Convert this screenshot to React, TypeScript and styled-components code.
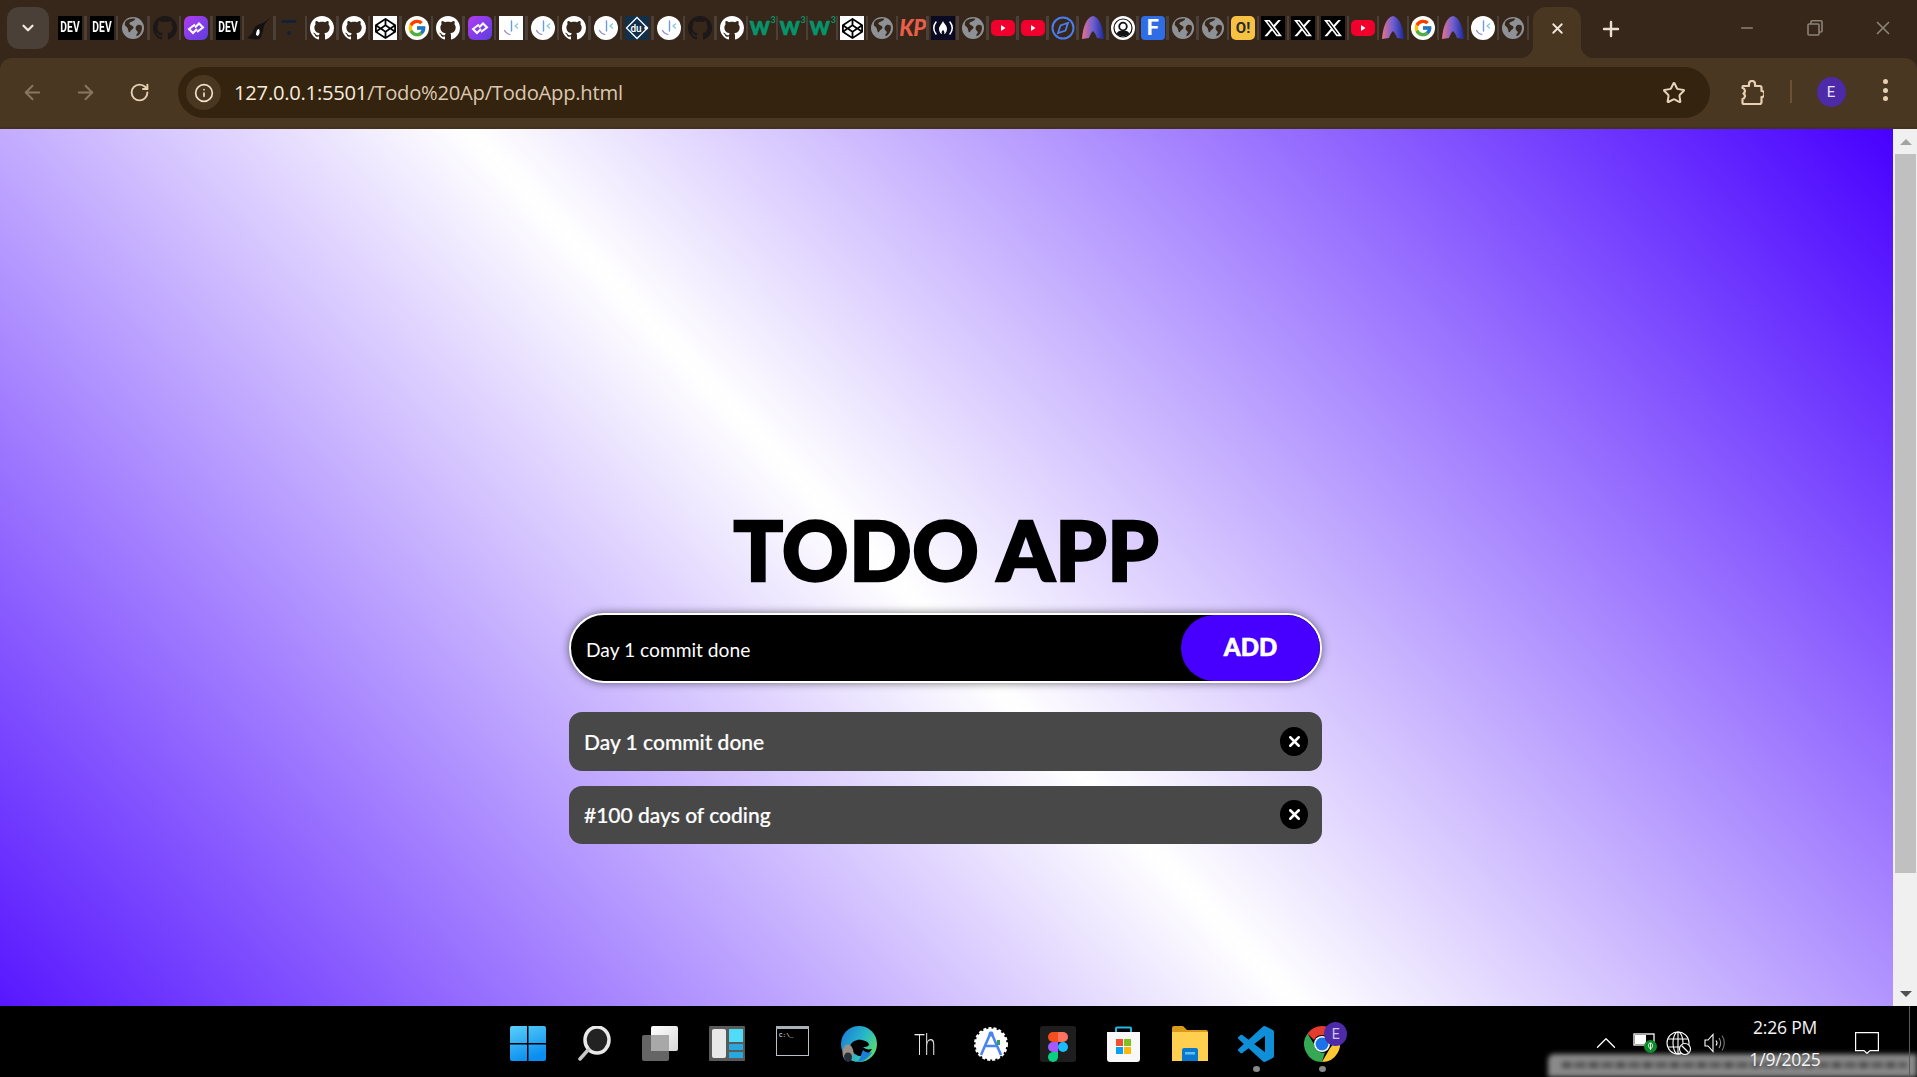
import React from "react";
import styled, { createGlobalStyle } from "styled-components";
import { ArrowLeft, ArrowRight, RotateCw, Info, Star, Plus, X, Minus, ChevronDown, ChevronUp } from "lucide-react";
import { FcGoogle } from "react-icons/fc";
import { FaCodepen } from "react-icons/fa";
import { FaXTwitter } from "react-icons/fa6";

const Global = createGlobalStyle`
  html, body { margin: 0; padding: 0; background: #000; }
  body { font-family: "Open Sans", "Liberation Sans", sans-serif; overflow: hidden; }
  * { box-sizing: border-box; }
`;

const Screen = styled.div`
  width: 1917px; height: 1077px; display: flex; flex-direction: column; overflow: hidden; position: relative;
`;

/* ---------- tab strip ---------- */
const TabStrip = styled.div`
  height: 58px; background: #36271a; display: flex; align-items: flex-start; padding-left: 7px; flex: none;
`;
const TabSearch = styled.div`
  width: 42px; height: 42px; margin-top: 7px; border-radius: 12px; background: #4a4038; color: #f2e8dc;
  display: flex; align-items: center; justify-content: center; flex: none;
`;
const TabRow = styled.div`
  display: flex; margin: 16px 0 0 5.25px; flex: none;
`;
const TabCell = styled.div<{ $w: number }>`
  width: ${p => p.$w}px; height: 24px; flex: none; display: flex; align-items: center; justify-content: center;
  position: relative;
  &::after { content: ""; position: absolute; right: -1px; top: 0; bottom: 0; width: 2.5px; background: #4a4038; }
`;
const ActiveTab = styled.div`
  width: 48px; height: 51px; margin: 7px 0 0 5px; background: #4a3722; border-radius: 13px 13px 0 0; color: #f2e8dc;
  display: flex; align-items: center; justify-content: center; padding-bottom: 9px; position: relative; flex: none;
  &::before, &::after { content: ""; position: absolute; bottom: 0; width: 13px; height: 13px; }
  &::before { left: -13px; background: radial-gradient(circle at 0 0, transparent 13px, #4a3722 13.5px); }
  &::after { right: -13px; background: radial-gradient(circle at 100% 0, transparent 13px, #4a3722 13.5px); }
`;
const NewTab = styled.div`
  width: 24px; height: 24px; margin: 17px 0 0 18px; color: #eadfd2; flex: none; display: flex;
`;
const WindowControls = styled.div`
  margin-left: auto; display: flex; color: #8b8378; flex: none;
`;
const WindowButton = styled.div`
  width: 68px; height: 42px; margin-top: 7px; display: flex; align-items: center; justify-content: center;
`;

/* ---------- favicons ---------- */
const LetterTile = styled.span<{ $bg: string; $fg: string; $radius?: number; $size: number }>`
  width: 24px; height: 24px; background: ${p => p.$bg}; color: ${p => p.$fg}; border-radius: ${p => p.$radius ?? 0}px;
  font: 700 ${p => p.$size}px/24px "Roboto", "Liberation Sans", sans-serif; text-align: center; display: block; overflow: hidden;
`;
const DevLabel = styled.span`
  display: block; transform: scaleX(0.82) scaleY(1.1); letter-spacing: 0.2px;
`;
const WhiteSquare = styled.span`
  width: 24px; height: 24px; background: #fff; display: flex; align-items: center; justify-content: center; color: #000;
`;
const WhiteDisc = styled(WhiteSquare)`
  border-radius: 50%;
`;
const XTile = styled(WhiteSquare)`
  background: #000; color: #fff;
`;
const W3Mark = styled.span`
  color: #04956c; font: 900 19px/24px "Lato", "Liberation Sans", sans-serif; display: block; width: 25px; position: relative;
  -webkit-text-stroke: 0.7px #04956c; letter-spacing: 0;
  & > sup { font-size: 9px; font-weight: 700; position: absolute; right: -1px; top: -8px; line-height: 24px; -webkit-text-stroke: 0; }
`;
const KpMark = styled.span`
  color: #ea5f4c; font: italic 900 22px/24px "Lato", "Liberation Sans", sans-serif; letter-spacing: -0.5px;
`;

const GH = "M8 0C3.58 0 0 3.58 0 8c0 3.54 2.29 6.53 5.47 7.59.4.07.55-.17.55-.38 0-.19-.01-.82-.01-1.49-2.01.37-2.53-.49-2.69-.94-.09-.23-.48-.94-.82-1.13-.28-.15-.68-.52-.01-.53.63-.01 1.08.58 1.23.82.72 1.21 1.87.87 2.33.66.07-.52.28-.87.51-1.07-1.78-.2-3.64-.89-3.64-3.95 0-.87.31-1.59.82-2.15-.08-.2-.36-1.02.08-2.12 0 0 .67-.21 2.2.82.64-.18 1.32-.27 2-.27.68 0 1.36.09 2 .27 1.53-1.04 2.2-.82 2.2-.82.44 1.1.16 1.92.08 2.12.51.56.82 1.27.82 2.15 0 3.07-1.87 3.75-3.65 3.95.29.25.54.73.54 1.48 0 1.07-.01 1.93-.01 2.2 0 .21.15.46.55.38A8.013 8.013 0 0016 8c0-4.42-3.58-8-8-8z";

const Github = ({ c }: { c: string }) => (
  <svg width="24" height="24" viewBox="0 0 16 16"><path d={GH} fill={c} /></svg>
);
const Globe = () => (
  <svg width="22" height="24" viewBox="0 0 24 24">
    <circle cx="12" cy="12" r="12" fill="#8e9297" />
    <path d="M4 4.500C7 2 11 1 14.500 2c-.5 2-3 3-5 3.500-1.500.5-2 2-.5 3 2 1 4 1.500 3.500 3.500-.5 1.500-2.500 1.500-3 3-.5 1-1 2-2 1.500-1-2-.5-3-1.500-4.500S3.500 10 3 8.500c0-1.500.5-3 1-4z" fill="#36271a" />
    <path d="M16.500 9c1.500-.8 3.500-.5 5 .5.500 2.500.2 4.500-.5 6-1 2.500-2.500 4.500-5 5.500-.7-1 0-2.500 1-3.500s-.3-2-1.500-3c-1-1.200-1-4 1-5.500z" fill="#36271a" />
  </svg>
);
const Slash = () => (
  <svg width="24" height="24" viewBox="0 0 24 24" fill="none">
    <path d="M11 18.500c-2.500-.5-4.500-2-5.500-4" stroke="#8d86d8" strokeWidth="1.200" strokeLinecap="round" />
    <path d="M12.500 5v10" stroke="#6f9bd8" strokeWidth="1.400" strokeLinecap="round" />
    <path d="M19 7.500l-3 2.500 3 2.500" stroke="#7cc7e0" strokeWidth="1.200" />
  </svg>
);
const Purple = () => (
  <svg width="24" height="24" viewBox="0 0 24 24">
    <defs><linearGradient id="pg" x1="0" y1="0" x2="1" y2="1"><stop offset="0" stopColor="#b23cf0" /><stop offset="1" stopColor="#5a3fe0" /></linearGradient></defs>
    <rect width="24" height="24" rx="6" fill="url(#pg)" />
    <path d="M11 8.500L5 13l4 4 4-4M13 16l6-4.500-4-4-4 4" fill="none" stroke="#fff" strokeWidth="2" />
  </svg>
);
const Bird = () => (
  <svg width="24" height="24" viewBox="0 0 24 24">
    <path d="M0 22c2-1 3-3 5-4 1-4 3-9 8-10 4-1 7-4 11-7-3 3-6 6-7 9-1 5-2 9-4 13-5 1-9 0-13-1z" fill="#141210" />
    <path d="M9 19c0-3 1-6 3-6 1 2 1 5-1 7z" fill="#fff" />
  </svg>
);
const DarkT = () => (
  <svg width="24" height="24" viewBox="0 0 24 24">
    <rect x="2.500" y="4" width="15" height="3" rx="1" fill="#142033" />
    <circle cx="10" cy="17" r="2" fill="#142033" />
  </svg>
);
const Du = () => (
  <svg width="24" height="24" viewBox="0 0 24 24">
    <rect width="24" height="24" fill="#12304a" />
    <path d="M12 1.500L22.500 12 12 22.500 1.500 12z" fill="none" stroke="#fff" strokeWidth="1.300" />
    <text x="11" y="15.500" textAnchor="middle" fontSize="10" fontFamily="Roboto" fontWeight="500" fill="#fff">du</text>
    <circle cx="21" cy="12" r="1.800" fill="#fff" />
  </svg>
);
const Youtube = () => (
  <svg width="24" height="24" viewBox="0 0 24 24">
    <rect y="4" width="24" height="16" rx="5" fill="#f2002d" />
    <path d="M10 9v6l4.500-3z" fill="#fff" />
  </svg>
);
const Compass = () => (
  <svg width="24" height="24" viewBox="0 0 24 24" fill="none">
    <circle cx="12" cy="12" r="10.500" stroke="#4a7df0" strokeWidth="2" />
    <path d="M17 7l-2.500 7.500L7 17l2.500-7.500z" stroke="#4a7df0" strokeWidth="1.800" />
  </svg>
);
const Arc = ({ id }: { id: string }) => (
  <svg width="22" height="24" viewBox="0 0 22 24">
    <defs><linearGradient id={id} x1="0" y1="0" x2="1" y2="0"><stop offset="0" stopColor="#e8718a" /><stop offset="0.5" stopColor="#6f5fd0" /><stop offset="1" stopColor="#1a2a9a" /></linearGradient></defs>
    <path d="M11 0C5 1 1 10 0 23l7-1c1-3 2-5 4-7 2 2 3 4 4 7l7 1C21 10 17 1 11 0z" fill={`url(#${id})`} />
  </svg>
);
const Avatar = () => (
  <svg width="24" height="24" viewBox="0 0 24 24">
    <circle cx="12" cy="12" r="12" fill="#fff" />
    <circle cx="12" cy="12" r="9" fill="none" stroke="#111" strokeWidth="1.200" />
    <circle cx="12" cy="10.500" r="3.800" fill="none" stroke="#111" strokeWidth="1.800" />
    <path d="M5.500 18c1-3 3.500-3.500 6.500-3.500s5.500.5 6.500 3.500c-3.500 3-9.500 3-13 0z" fill="#111" />
  </svg>
);
const FccMark = () => (
  <svg width="24" height="24" viewBox="0 0 24 24" fill="none">
    <rect width="24" height="24" fill="#0a0a23" />
    <path d="M5 6c-3 4-3 8 0 12M19 6c3 4 3 8 0 12" stroke="#fff" strokeWidth="1.500" strokeLinecap="round" />
    <path d="M12 5c1 3 4 4 4 8 0 3-2 5-3 5 1-2 0-3-1-4-1 1-2 2-1 4-1 0-3-2-3-5 0-3 3-5 4-8z" fill="#fff" />
  </svg>
);

const FAV: string[] = [
  "dev", "dev", "globe", "ghd", "purple", "dev", "bird", "t", "gh", "gh", "cp", "g", "gh", "purple", "sq", "disc", "gh", "disc", "du", "disc", "ghd", "gh",
  "w3", "w3", "w3", "cp", "globe", "kp", "fcc", "globe", "yt", "yt", "compass", "arc", "avatar", "f", "globe", "globe", "oo", "x", "x", "x", "yt", "arc", "g", "arc", "disc", "globe",
];

const Favicon = ({ kind, index }: { kind: string; index: number }) => {
  switch (kind) {
    case "dev": return <LetterTile $bg="#000" $fg="#fff" $size={12.5}><DevLabel>DEV</DevLabel></LetterTile>;
    case "globe": return <Globe />;
    case "ghd": return <Github c="#1b1817" />;
    case "gh": return <Github c="#fff" />;
    case "purple": return <Purple />;
    case "bird": return <Bird />;
    case "t": return <DarkT />;
    case "cp": return <WhiteSquare><FaCodepen size={21} /></WhiteSquare>;
    case "g": return <WhiteDisc><FcGoogle size={20} /></WhiteDisc>;
    case "sq": return <WhiteSquare><Slash /></WhiteSquare>;
    case "disc": return <WhiteDisc><Slash /></WhiteDisc>;
    case "du": return <Du />;
    case "w3": return <W3Mark>W<sup>3</sup></W3Mark>;
    case "kp": return <KpMark>KP</KpMark>;
    case "fcc": return <FccMark />;
    case "yt": return <Youtube />;
    case "compass": return <Compass />;
    case "arc": return <Arc id={`arc${index}`} />;
    case "avatar": return <Avatar />;
    case "f": return <LetterTile $bg="#2f6de6" $fg="#fff" $radius={4} $size={22}>F</LetterTile>;
    case "oo": return <LetterTile $bg="#f7c144" $fg="#2a2a2a" $radius={5} $size={15}>O!</LetterTile>;
    case "x": return <XTile><FaXTwitter size={20} /></XTile>;
    default: return null;
  }
};

/* ---------- toolbar ---------- */
const Toolbar = styled.div`
  height: 71px; flex: none; background: #36271a; display: flex;
`;
const ToolbarInner = styled.div`
  flex: 1; background: #4a3722; border-radius: 12px 12px 0 0; border-bottom: 2px solid #43321f;
  display: flex; align-items: flex-start; position: relative;
`;
const NavButton = styled.div<{ $w: number; $dim?: boolean; $ml?: number }>`
  width: ${p => p.$w}px; height: 51px; margin: 9px 0 0 ${p => p.$ml ?? 0}px; flex: none; display: flex; align-items: center; justify-content: center;
  color: ${p => (p.$dim ? "#8a7763" : "#e6cfb3")};
`;
const Omnibox = styled.div`
  width: 1532px; height: 51px; margin-top: 9px; flex: none; margin-left: 6px; background: #34230f; border-radius: 26px;
  display: flex; align-items: center; padding: 0 24px 0 8px;
`;
const InfoChip = styled.div`
  width: 35px; height: 35px; border-radius: 50%; background: #4a3722; color: #efe0cc; display: flex; align-items: center; justify-content: center; flex: none;
`;
const Url = styled.div`
  margin-left: 13px; font: 400 20.2px/1 "Open Sans", "Liberation Sans", sans-serif; color: #dcc8b0; white-space: nowrap; flex: 1; letter-spacing: -0.25px;
  & > b { font-weight: 400; color: #f7ecdd; }
`;
const Divider = styled.div`
  width: 2px; height: 23px; background: #6a5238; margin: 22px 0 0 0; flex: none;
`;
const ProfileDisc = styled.div`
  width: 29px; height: 30px; border-radius: 50%; background: #4c2aa8; color: #e8e0ff; font: 400 15px/30px "Roboto", sans-serif; text-align: center;
  margin: 19px 0 0 24.5px; flex: none;
`;
const MenuDots = styled.div`
  margin: 21px 0 0 37px; width: 5px; display: flex; flex-direction: column; gap: 3.500px; flex: none;
  & > i { width: 5px; height: 5px; border-radius: 50%; background: #e6cfb3; display: block; }
`;

/* ---------- page ---------- */
const Viewport = styled.div`
  flex: 1; display: flex; min-height: 0;
`;
const PageClip = styled.div`
  flex: 1; overflow: hidden; min-width: 0;
`;
const Page = styled.div`
  height: 1011px; background: linear-gradient(46.5deg, #4700ff 0%, #ffffff 50%, #4700ff 100%);
  display: flex; flex-direction: column; align-items: center; padding-top: 372px;
`;
const Title = styled.h1`
  margin: 0; height: 96px; font: 900 82px/96px "Lato", "Liberation Sans", sans-serif; color: #000; letter-spacing: 0.7px;
  -webkit-text-stroke: 2.4px #000;
`;
const Widget = styled.div`
  width: 753px; margin: 16px 2px 0 0; display: flex; flex-direction: column;
`;
const Form = styled.div`
  height: 70px; border: 2px solid #fff; border-radius: 35px; background: #000; display: flex; align-items: center; overflow: hidden;
  box-shadow: 0 0 9px rgba(0, 0, 0, 0.55);
`;
const FormInput = styled.div`
  flex: 1; padding: 3px 0 0 15px; color: #fff; font: 400 19.200px/1 "Lato", "Liberation Sans", sans-serif;
`;
const AddButton = styled.div`
  width: 139px; height: 100%; background: #4700ff; border-radius: 35px; color: #fff; text-align: center;
  font: 900 24px/64px "Lato", "Liberation Sans", sans-serif; -webkit-text-stroke: 0.6px #fff;
`;
const List = styled.div`
  margin-top: 29px; display: flex; flex-direction: column; gap: 15px;
`;
const Item = styled.div`
  height: 58.500px; background: #484848; border-radius: 13px; display: flex; align-items: center; justify-content: space-between;
  padding: 0 14px 0 15px; color: #fff; font: 500 21px/1 "Lato", "Liberation Sans", sans-serif; -webkit-text-stroke: 0.2px #fff;
`;
const RemoveButton = styled.div`
  width: 28px; height: 29px; border-radius: 50%; background: #000; color: #fff; display: flex; align-items: center; justify-content: center;
`;

/* ---------- scrollbar ---------- */
const ScrollBar = styled.div`
  width: 24px; flex: none; background: #f0f0f0; display: flex; flex-direction: column; align-items: flex-end;
`;
const ScrollArrow = styled.div<{ $down?: boolean }>`
  width: 24px; height: 25px; flex: none; display: flex; align-items: center; justify-content: center; padding-left: 1px;
  &::before {
    content: ""; width: 0; height: 0; border-left: 6px solid transparent; border-right: 6px solid transparent;
    ${p => (p.$down ? "border-top: 6px solid #505050;" : "border-bottom: 6px solid #a3a3a3;")}
  }
`;
const Thumb = styled.div`
  width: 21px; height: 719px; background: #c0c0c0; margin-right: 1px; flex: none;
`;
const ScrollGap = styled.div`
  flex: 1;
`;

/* ---------- taskbar ---------- */
const Taskbar = styled.div`
  height: 71px; flex: none; background: #000; display: flex; position: relative; padding-left: 495px;
`;
const AppCell = styled.div<{ $running?: boolean }>`
  width: 66.200px; height: 71px; flex: none; padding-top: 20px; display: flex; justify-content: center; position: relative;
  ${p => p.$running ? `&::after { content: ""; position: absolute; left: 30px; top: 60px; width: 7px; height: 6px; border-radius: 50%; background: #888; }` : ""}
`;
const ThText = styled.span`
  font: 300 29px/36px "Open Sans", "Liberation Sans", sans-serif; color: #ececec; display: block; transform: scaleX(0.66);
`;
const ChromeWrap = styled.div`
  position: relative; width: 36px; height: 36px;
`;
const ChromeBadge = styled.div`
  position: absolute; left: 20px; top: -4px; width: 23px; height: 24px; border-radius: 50%; background: #4c2aa8; color: #cfc4f0;
  font: 400 14px/24px "Roboto", sans-serif; text-align: center;
`;
const Tray = styled.div`
  margin-left: auto; display: flex; align-items: center; position: relative; z-index: 2; height: 71px; padding-right: 7px; color: #fff;
`;
const TrayIcon = styled.div<{ $w: number; $ml: number }>`
  width: ${p => p.$w}px; margin-left: ${p => p.$ml}px; flex: none; display: flex; justify-content: center; margin-top: 2px;
  & > svg { flex: none; }
`;
const Clock = styled.div`
  width: 78px; margin-left: 20px; flex: none; text-align: center; font: 400 17.500px/32px "Open Sans", "Liberation Sans", sans-serif; color: #f4f4f4;
  padding-top: 3px; white-space: nowrap; letter-spacing: -0.2px;
`;
const ClockLine = styled.div`
  height: 32px;
`;
const Notify = styled.div`
  margin: 2px 30px 0 31px; flex: none; width: 24px; height: 22px; display: flex;
`;
const DesktopEdge = styled.div`
  width: 1px; height: 71px; background: #5a5a5a; flex: none;
`;
const BlurStrip = styled.div`
  position: absolute; left: 1548px; top: 48px; width: 369px; height: 23px; background: #8a8a8a; filter: blur(2.500px); border-radius: 6px 0 0 0;
  &::after {
    content: ""; position: absolute; left: 14px; right: 10px; top: 8px; height: 6px;
    background: repeating-linear-gradient(90deg, #4a4a4a 0 9px, #7a7a7a 9px 13px, #555 13px 24px, #868686 24px 27px);
  }
`;

/* ---------- taskbar icons ---------- */
const WinLogo = () => (
  <svg width="36" height="35" viewBox="0 0 36 35">
    <defs><linearGradient id="w1" x1="0" y1="0" x2="0.400" y2="1"><stop offset="0" stopColor="#5ad0f8" /><stop offset="1" stopColor="#0b8ef0" /></linearGradient></defs>
    <path d="M2 0h15v17H0V2a2 2 0 012-2zM18.500 0H34a2 2 0 012 2v15H18.500zM0 18.500h17V35H2a2 2 0 01-2-2zM18.500 18.500H36V33a2 2 0 01-2 2H18.500z" fill="url(#w1)" />
  </svg>
);
const SearchIcon = () => (
  <svg width="34" height="35" viewBox="0 0 34 35" fill="none">
    <ellipse cx="20" cy="14" rx="12" ry="13" fill="#222" stroke="#e8e8e8" strokeWidth="3.500" />
    <path d="M11 24L3 33" stroke="#c8c8c8" strokeWidth="3.500" strokeLinecap="round" />
  </svg>
);
const TaskView = () => (
  <svg width="36" height="35" viewBox="0 0 36 35">
    <defs><linearGradient id="tv" x1="0" y1="0" x2="1" y2="1"><stop offset="0" stopColor="#fff" /><stop offset="1" stopColor="#d8d8d8" /></linearGradient></defs>
    <rect x="9" y="0" width="27" height="25" rx="2" fill="url(#tv)" />
    <rect x="0" y="9" width="27" height="26" rx="2" fill="#6a6a6a" fillOpacity="0.950" />
    <rect x="9" y="9" width="18" height="16" fill="#a8a8a8" />
  </svg>
);
const Widgets = () => (
  <svg width="36" height="35" viewBox="0 0 36 35">
    <rect width="36" height="35" rx="1" fill="#5a5a5a" />
    <rect x="3" y="3" width="14" height="29" rx="2" fill="#e8e8e8" />
    <rect x="20" y="3" width="14" height="13" fill="#4fdcf8" />
    <rect x="20" y="18" width="14" height="6" fill="#29a8e0" />
    <rect x="20" y="26" width="14" height="6" fill="#29a8e0" />
  </svg>
);
const CmdIcon = () => (
  <svg width="33" height="30" viewBox="0 0 33 30">
    <rect x="0.500" y="0.500" width="32" height="29" fill="#000" stroke="#b8c0c8" />
    <rect x="0" y="0" width="33" height="3" fill="#a8b0b8" />
    <text x="3" y="11" fontSize="6" fontFamily="Liberation Mono" fill="#fff">C:\_</text>
  </svg>
);
const EdgeIcon = () => (
  <svg width="36" height="36" viewBox="0 0 36 36">
    <defs><linearGradient id="ed" x1="0" y1="0.200" x2="1" y2="0.700"><stop offset="0" stopColor="#1b7fd8" /><stop offset="0.550" stopColor="#27b8c8" /><stop offset="1" stopColor="#5fdc6a" /></linearGradient></defs>
    <circle cx="18" cy="18" r="18" fill="url(#ed)" />
    <path d="M9 20c2-5 7-7 12-6 5 1 7 3 7 5-1 1.500-3 2-6 2 2 2 5 3 9 2-3 5-8 7-13 7-4-1-7-4-9-10z" fill="#000" />
    <path d="M22 24c3 3 7 3 9 2-3 6-9 10-16 10 2-1 3-2 4-4 1-3 2-6 3-8z" fill="#1b7fd8" />
    <ellipse cx="7" cy="27" rx="5.500" ry="8.500" fill="#9a9088" />
    <ellipse cx="7" cy="31" rx="4" ry="4.500" fill="#26303c" />
  </svg>
);
const AndroidStudio = () => (
  <svg width="36" height="36" viewBox="0 0 36 36" fill="none">
    <circle cx="18" cy="18" r="15.500" fill="#fff" stroke="#fff" strokeWidth="3" strokeDasharray="3 2" />
    <path d="M18 6L8 29M18 6l10 23M11.500 20h13" stroke="#4a84f0" strokeWidth="2.600" />
    <circle cx="18" cy="8" r="2.500" fill="#4a84f0" />
    <path d="M24 14h3v5h-3z" fill="#3a9a5a" />
  </svg>
);
const FigmaIcon = () => (
  <svg width="36" height="36" viewBox="0 0 36 36">
    <rect width="36" height="36" rx="3" fill="#1e1e1e" />
    <path d="M18 6h-5a5 5 0 000 10h5z" fill="#f24e1e" />
    <path d="M18 6h5a5 5 0 010 10h-5z" fill="#ff7262" />
    <path d="M18 16h-5a5 5 0 000 10h5z" fill="#a259ff" />
    <circle cx="23" cy="21" r="5" fill="#1abcfe" />
    <path d="M13 26h5v5a5 5 0 11-5-5z" fill="#0acf83" />
  </svg>
);
const StoreIcon = () => (
  <svg width="35" height="36" viewBox="0 0 35 36" fill="none">
    <path d="M10 7V2.500a1 1 0 011-1h13a1 1 0 011 1V7" stroke="#24b8e0" strokeWidth="2" />
    <path d="M1 6h33v27a3 3 0 01-3 3H4a3 3 0 01-3-3z" fill="#f8f8f8" />
    <rect x="10" y="13" width="7" height="7" fill="#f05030" />
    <rect x="18" y="13" width="7" height="7" fill="#80c020" />
    <rect x="10" y="21" width="7" height="7" fill="#08a0f0" />
    <rect x="18" y="21" width="7" height="7" fill="#ffb808" />
  </svg>
);
const FolderIcon = () => (
  <svg width="36" height="35" viewBox="0 0 36 35">
    <path d="M0 2a2 2 0 012-2h9l4 4h19a2 2 0 012 2v6H0z" fill="#d89a18" />
    <path d="M0 6h36v29H0z" fill="#ffd050" />
    <path d="M10 24a2 2 0 012-2h12a2 2 0 012 2v11H10z" fill="#0b78d0" />
    <rect x="13" y="26" width="10" height="2.500" fill="#60c0f0" />
  </svg>
);
const VsCode = () => (
  <svg width="36" height="36" viewBox="0 0 24 24" preserveAspectRatio="none">
    <path d="M23.150 2.587L18.210.21a1.494 1.494 0 0 0-1.705.29l-9.460 8.630-4.120-3.128a.999.999 0 0 0-1.276.057L.327 7.261A1 1 0 0 0 .326 8.740L3.899 12 .326 15.260a1 1 0 0 0 .001 1.479L1.650 17.940a.999.999 0 0 0 1.276.057l4.120-3.128 9.460 8.630a1.492 1.492 0 0 0 1.704.29l4.942-2.377A1.500 1.500 0 0 0 24 20.060V3.939a1.500 1.500 0 0 0-.850-1.352zm-5.146 14.861L10.826 12l7.178-5.448v10.896z" fill="#0f8fd8" />
  </svg>
);
const ChromeIcon = () => (
  <svg width="36" height="36" viewBox="0 0 36 36">
    <path d="M18 0a18 18 0 0115.600 9H18a9 9 0 00-8 5L3.500 7.500A18 18 0 0118 0z" fill="#e33b2e" />
    <path d="M33.600 9A18 18 0 0118 36l7.800-13.500a9 9 0 00-.5-13.500z" fill="#fcc934" />
    <path d="M18 36A18 18 0 013.500 7.500L10 18a9 9 0 0011 8.500z" fill="#34a853" />
    <circle cx="18" cy="18" r="8" fill="#fff" />
    <circle cx="18" cy="18" r="6.500" fill="#1a73e8" />
  </svg>
);

const TASK_ICONS = [<WinLogo />, <SearchIcon />, <TaskView />, <Widgets />, <CmdIcon />, <EdgeIcon />, <ThText>Th</ThText>, <AndroidStudio />, <FigmaIcon />, <StoreIcon />, <FolderIcon />];

export default function App() {
  return (
    <Screen>
      <Global />
      <TabStrip>
        <TabSearch><ChevronDown size={18} strokeWidth={3} /></TabSearch>
        <TabRow>
          {FAV.map((k, i) => (
            <TabCell key={i} $w={i < 22 ? 31.5 : 30.05}><Favicon kind={k} index={i} /></TabCell>
          ))}
        </TabRow>
        <ActiveTab><X size={17} strokeWidth={2.6} /></ActiveTab>
        <NewTab><Plus size={24} strokeWidth={2.4} /></NewTab>
        <WindowControls>
          <WindowButton><Minus size={18} strokeWidth={2} /></WindowButton>
          <WindowButton>
            <svg width="16" height="16" viewBox="0 0 16 16" fill="none" stroke="currentColor" strokeWidth="1.600">
              <rect x="1" y="4" width="11" height="11" rx="1" /><path d="M4 4V1.800a1 1 0 011-1h9a1 1 0 011 1V11a1 1 0 01-1 1h-2" />
            </svg>
          </WindowButton>
          <WindowButton><X size={22} strokeWidth={1.8} /></WindowButton>
        </WindowControls>
      </TabStrip>

      <Toolbar>
        <ToolbarInner>
          <NavButton $w={64} $dim><ArrowLeft size={23} strokeWidth={2} /></NavButton>
          <NavButton $w={42} $dim><ArrowRight size={23} strokeWidth={2} /></NavButton>
          <NavButton $w={66}><RotateCw size={21} strokeWidth={2.2} /></NavButton>
          <Omnibox>
            <InfoChip><Info size={20} strokeWidth={2} /></InfoChip>
            <Url><b>127.0.0.1:5501</b>/Todo%20Ap/TodoApp.html</Url>
            <Star size={24} strokeWidth={2} color="#e6d3bc" />
          </Omnibox>
          <NavButton $w={76} $ml={4}>
            <svg width="24" height="26" viewBox="0 0 24 26" fill="none" stroke="currentColor" strokeWidth="2.200" strokeLinejoin="round">
              <path d="M3 6h6V4a3 3 0 016 0v2h5a1.500 1.500 0 011.500 1.500V11a3 3 0 010 6v5a2 2 0 01-2 2H4a1.500 1.500 0 01-1.500-1.500V19a3 3 0 001-5.500 3 3 0 00-1-5.500V7z" />
            </svg>
          </NavButton>
          <Divider />
          <ProfileDisc>E</ProfileDisc>
          <MenuDots><i /><i /><i /></MenuDots>
        </ToolbarInner>
      </Toolbar>

      <Viewport>
        <PageClip>
          <Page>
            <Title>TODO APP</Title>
            <Widget>
              <Form>
                <FormInput>Day 1 commit done</FormInput>
                <AddButton>ADD</AddButton>
              </Form>
              <List>
                <Item>Day 1 commit done<RemoveButton><X size={17} strokeWidth={3.5} /></RemoveButton></Item>
                <Item>#100 days of coding<RemoveButton><X size={17} strokeWidth={3.5} /></RemoveButton></Item>
              </List>
            </Widget>
          </Page>
        </PageClip>
        <ScrollBar>
          <ScrollArrow />
          <Thumb />
          <ScrollGap />
          <ScrollArrow $down />
        </ScrollBar>
      </Viewport>

      <Taskbar>
        {TASK_ICONS.map((ic, i) => <AppCell key={i}>{ic}</AppCell>)}
        <AppCell $running><VsCode /></AppCell>
        <AppCell $running>
          <ChromeWrap><ChromeIcon /><ChromeBadge>E</ChromeBadge></ChromeWrap>
        </AppCell>
        <BlurStrip />
        <Tray>
          <TrayIcon $w={18} $ml={0}><ChevronUp size={34} strokeWidth={0.9} /></TrayIcon>
          <TrayIcon $w={24} $ml={18}>
            <svg width="24" height="20" viewBox="0 0 24 20">
              <rect x="1" y="1" width="20" height="11" fill="#000" stroke="#fff" strokeWidth="1.300" />
              <rect x="2" y="2" width="11" height="9" fill="#fff" />
              <circle cx="17.500" cy="13.500" r="6.500" fill="#0f8a2a" />
              <path d="M17.500 10v7M15.500 12.500c0 2 1 3 2 3s2-1 2-3-1-2.500-2-2.500-2 .5-2 2.500z" fill="none" stroke="#fff" strokeWidth="0.900" />
            </svg>
          </TrayIcon>
          <TrayIcon $w={24} $ml={9}>
            <svg width="25" height="24" viewBox="0 0 25 24" fill="none" stroke="#fff" strokeWidth="1.100">
              <circle cx="12" cy="12" r="11" /><ellipse cx="12" cy="12" rx="5" ry="11" /><path d="M2 8h20M2 16h20M12 1v22" />
              <circle cx="19" cy="18" r="5.500" fill="#000" /><path d="M15.500 14.500l7 7" strokeWidth="1.300" />
            </svg>
          </TrayIcon>
          <TrayIcon $w={22} $ml={14}>
            <svg width="23" height="20" viewBox="0 0 23 20" fill="none" stroke="#fff" strokeWidth="1.100">
              <path d="M1 7h3l5-5.500v17L4 13H1z" /><path d="M12 7.500c1.200 1.500 1.200 3.500 0 5" /><path d="M15 5c2 3 2 7 0 10" stroke="#999" /><path d="M18 2.500c3 4 3 11 0 15" stroke="#777" />
            </svg>
          </TrayIcon>
          <Clock><ClockLine>2:26 PM</ClockLine><ClockLine>1/9/2025</ClockLine></Clock>
          <Notify>
            <svg width="24" height="22" viewBox="0 0 24 22" fill="none" stroke="#fff" strokeWidth="1.200"><path d="M.6.6h22.800v18h-8.400l-3 2.800-3-2.800H.6z" /></svg>
          </Notify>
          <DesktopEdge />
        </Tray>
      </Taskbar>
    </Screen>
  );
}
